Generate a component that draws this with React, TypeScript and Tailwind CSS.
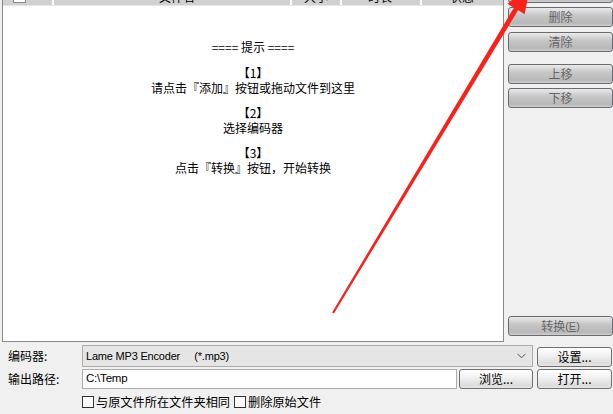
import React from "react";

const cjk = { fontFamily: '"Noto Sans CJK SC", "Liberation Sans", sans-serif' };
const lat = { fontFamily: '"Liberation Sans", "Noto Sans CJK SC", sans-serif' };

function DisBtn({ children, className = "" }: { children: React.ReactNode; className?: string }) {
  return (
    <div
      className={
        "h-[20px] w-[105px] shrink-0 rounded-[3px] border border-[#6a6a74] bg-[linear-gradient(#eaeaea,#c8c7c8_40%,#b9b8b9_85%,#d0d0d0)] flex items-center justify-center text-[12px] leading-none text-[#666666] " +
        className
      }
    >
      {children}
    </div>
  );
}

function Btn({ children, className = "" }: { children: React.ReactNode; className?: string }) {
  return (
    <div
      className={
        "h-[20px] shrink-0 rounded-[3px] border border-[#707070] bg-[linear-gradient(#ffffff,#f0f0f0_45%,#dcdcdc_85%,#e6e6e6)] flex items-center justify-center text-[12px] leading-none text-black " +
        className
      }
    >
      {children}
    </div>
  );
}

export default function App() {
  return (
    <div className="relative w-[613px] h-[414px] overflow-hidden bg-[#f0f0f0]" style={cjk}>
      <div className="flex h-[342px]">
        <div className="ml-[2px] w-[502px] h-[342px] border-l border-r border-b border-[#8a8a8a] bg-white flex flex-col">
          <div className="h-[6px] flex bg-[#d1d1d1] overflow-hidden border-b border-[#e6e6e6] text-[12px] leading-none">
            <div className="w-[51px] relative border-r-2 border-white">
              <div className="absolute left-[10px] top-[-10px] w-[13px] h-[13px] border border-[#8a8a8a] bg-white" />
            </div>
            <div className="w-[238px] relative border-r-2 border-white">
              <span className="absolute left-[105px] top-[-9px]">文件名</span>
            </div>
            <div className="w-[50px] relative border-r-2 border-white">
              <span className="absolute left-[12px] top-[-9px]">大小</span>
            </div>
            <div className="w-[80px] relative border-r-2 border-white">
              <span className="absolute left-[26px] top-[-9px]">时长</span>
            </div>
            <div className="flex-1 relative">
              <span className="absolute left-[28px] top-[-9px]">状态</span>
            </div>
          </div>
          <div className="flex flex-col items-center pt-[33px] text-[12px] leading-[15px] text-black">
            <div>==== 提示 ====</div>
            <div className="mt-[11px]">【1】</div>
            <div>请点击『添加』按钮或拖动文件到这里</div>
            <div className="mt-[10px]">【2】</div>
            <div>选择编码器</div>
            <div className="mt-[10px]">【3】</div>
            <div>点击『转换』按钮，开始转换</div>
          </div>
        </div>
        <div className="flex-1 flex flex-col pl-[4px] pb-[6px]">
          <DisBtn className="mt-[-17px]">添加</DisBtn>
          <DisBtn className="mt-[4px]">删除</DisBtn>
          <DisBtn className="mt-[5px]">清除</DisBtn>
          <DisBtn className="mt-[12px]">上移</DisBtn>
          <DisBtn className="mt-[4px]">下移</DisBtn>
          <DisBtn className="mt-auto">
            转换<span style={lat} className="text-[11px]">(<span className="underline">E</span>)</span>
          </DisBtn>
        </div>
      </div>

      <div className="flex items-center h-[22px] mt-[3px]">
        <div className="w-[82px] pl-[8px] text-[12px] leading-none text-black">编码器:</div>
        <div className="w-[451px] h-[22px] border border-[#adadad] bg-[#e5e5e5] flex items-center pl-[3px] pr-[4px] text-[11px] tracking-[-0.2px] text-black" style={lat}>
          <span className="whitespace-pre">Lame MP3 Encoder     (*.mp3)</span>
          <svg className="ml-auto mr-[2px]" width="9" height="6" viewBox="0 0 9 6">
            <path d="M0.5 0.8 L4.5 4.8 L8.5 0.8" fill="none" stroke="#555" strokeWidth="1" />
          </svg>
        </div>
        <Btn className="ml-[4px] w-[75px] mt-[1px]">设置...</Btn>
      </div>

      <div className="flex items-center h-[20px] mt-[2px]">
        <div className="w-[82px] pl-[8px] text-[12px] leading-none text-black">输出路径:</div>
        <div className="w-[375px] h-[20px] border border-[#adadad] bg-white flex items-center pl-[3px] text-[11.5px] tracking-[-0.2px] text-black" style={lat}>
          C:\Temp
        </div>
        <Btn className="ml-[2px] w-[74px]">浏览...</Btn>
        <Btn className="ml-[4px] w-[75px]">打开...</Btn>
      </div>

      <div className="flex items-center h-[14px] mt-[6px] pl-[82px] text-[12.2px] leading-none text-black">
        <div className="w-[12px] h-[12px] border border-[#333] bg-white" />
        <span className="ml-[2px]">与原文件所在文件夹相同</span>
        <div className="ml-[4px] w-[12px] h-[12px] border border-[#333] bg-white" />
        <span className="ml-[2px]">删除原始文件</span>
      </div>

      <svg className="absolute left-0 top-0 pointer-events-none" width="613" height="414" viewBox="0 0 613 414">
        <polygon
          points="333.9,313.5 332.1,312.5 513.9,7.7 507.4,3.8 530.4,-15 524.6,14.2 518.1,10.3"
          fill="#f5231c"
        />
      </svg>
    </div>
  );
}
